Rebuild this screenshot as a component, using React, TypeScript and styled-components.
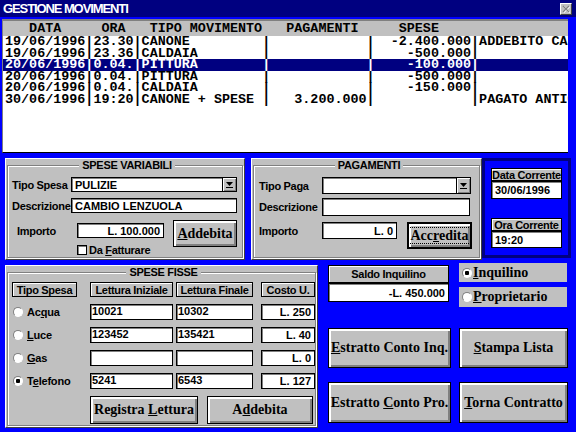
import React from 'react';
import styled, {createGlobalStyle} from 'styled-components';

const BLUE = '#0000ff';
const NAVY = '#000080';
const GRAY = '#c0c0c0';
const DARK = '#808080';
const SANS = '"Liberation Sans", Arial, sans-serif';
const SERIF = '"Liberation Serif", "Times New Roman", serif';
const MONO = '"Liberation Mono", "Courier New", monospace';

const GlobalStyle = createGlobalStyle`
  html, body { margin: 0; padding: 0; background: ${BLUE}; }
  body { font-family: ${SANS}; }
  * { box-sizing: border-box; }
`;

type Movimento = {data: string, ora: string, tipo: string, pag: string, spese: string, note: string};

const movimenti: Movimento[] = [
    {data: '19/06/1996', ora: '23.30', tipo: 'CANONE', pag: '', spese: '-2.400.000', note: 'ADDEBITO CANONE MESE'},
    {data: '19/06/1996', ora: '23.36', tipo: 'CALDAIA', pag: '', spese: '-500.000', note: ''},
    {data: '20/06/1996', ora: '0.04.', tipo: 'PITTURA', pag: '', spese: '-100.000', note: ''},
    {data: '20/06/1996', ora: '0.04.', tipo: 'PITTURA', pag: '', spese: '-500.000', note: ''},
    {data: '20/06/1996', ora: '0.04.', tipo: 'CALDAIA', pag: '', spese: '-150.000', note: ''},
    {data: '30/06/1996', ora: '19:20', tipo: 'CANONE + SPESE', pag: '3.200.000', spese: '', note: 'PAGATO ANTICIPATAMENTE'},
];

const header = '   DATA     ORA   TIPO MOVIMENTO   PAGAMENTI     SPESE';
const toLine = (m: Movimento) =>
    `${m.data}|${m.ora.padEnd(5)}|${m.tipo.padEnd(15)}|${m.pag.padStart(12)}|${m.spese.padStart(12)}|${m.note}`;

const Window = styled.div`
  width: 576px;
  height: 432px;
  background: ${BLUE};
  overflow: hidden;
  display: flex;
  flex-direction: column;
`;

const TitleBar = styled.div`
  flex: none;
  height: 17px;
  background: ${NAVY};
  color: #fff;
  display: flex;
  align-items: center;
  justify-content: space-between;
  padding: 0 4px 0 3px;
  font: bold 13px ${SANS};
  letter-spacing: -1.1px;
`;

const CloseBox = styled.div`
  width: 12px;
  height: 12px;
  background: ${GRAY};
  border: 1px solid;
  border-color: #fff #404040 #404040 #fff;
  display: flex;
  align-items: center;
  justify-content: center;
`;

const ListBox = styled.div`
  flex: none;
  margin: 2px 0 0 2px;
  width: 566px;
  height: 134px;
  background: #fff;
  border-top: 2px solid ${DARK};
  border-left: 1px solid ${DARK};
  border-bottom: 1px solid #000;
  overflow: hidden;
  font: bold 13.4px ${MONO};
`;

const ListHeader = styled.div`
  height: 15px;
  line-height: 15px;
  background: ${GRAY};
  white-space: pre;
  padding-left: 2px;
`;

const ListRow = styled.div<{ $sel?: boolean }>`
  height: 11.5px;
  line-height: 12px;
  white-space: pre;
  padding-left: 2px;
  background: ${p => p.$sel ? NAVY : 'transparent'};
  color: ${p => p.$sel ? '#fff' : '#000'};
`;

const PanelRow = styled.div<{ $mt: number, $h: number }>`
  flex: none;
  display: flex;
  align-items: flex-start;
  margin: ${p => p.$mt}px 0 0 5px;
  height: ${p => p.$h}px;
`;

const Panel = styled.div<{ $w: number, $h: number }>`
  width: ${p => p.$w}px;
  height: ${p => p.$h}px;
  background: ${GRAY};
  border: 1px solid;
  border-color: #fff #404040 #404040 #fff;
  padding: 0 1px 1px 1px;
  display: flex;
`;

const Frame = styled.fieldset<{ $pl: number, $pt: number }>`
  flex: 1;
  min-width: 0;
  margin: 0;
  padding: ${p => p.$pt}px 0 0 ${p => p.$pl}px;
  border: 1px solid ${DARK};
  box-shadow: inset 1px 1px 0 #fff, 1px 1px 0 #fff;
`;

const Legend = styled.legend`
  margin: 0 auto;
  padding: 0 3px;
  background: ${GRAY};
  font: bold 11px/13px ${SANS};
  letter-spacing: -0.3px;
`;

const Row = styled.div<{ $mt?: number, $top?: boolean }>`
  display: flex;
  align-items: ${p => p.$top ? 'flex-start' : 'center'};
  margin-top: ${p => p.$mt || 0}px;
`;

const Col = styled.div<{ $w: number }>`
  width: ${p => p.$w}px;
  display: flex;
  flex-direction: column;
`;

const Label = styled.span<{ $w: number, $pl?: number }>`
  flex: none;
  width: ${p => p.$w}px;
  padding-left: ${p => p.$pl || 0}px;
  font: bold 11px ${SANS};
  letter-spacing: -0.3px;
  white-space: nowrap;
`;

const Field = styled.div<{ $w: number, $h: number, $right?: boolean, $top?: boolean }>`
  flex: none;
  width: ${p => p.$w}px;
  height: ${p => p.$h}px;
  background: #fff;
  border: 1px solid #000;
  box-shadow: inset 1px 1px 0 ${DARK};
  display: flex;
  align-items: ${p => p.$top ? 'flex-start' : 'center'};
  justify-content: ${p => p.$right ? 'flex-end' : 'flex-start'};
  padding: ${p => p.$top ? '0 2px 0 1px' : '0 3px 0 3px'};
  font: bold 11px ${SANS};
  white-space: nowrap;
  overflow: hidden;
`;

const ComboWrap = styled.div`
  position: relative;
`;

const ComboBtn = styled.div`
  position: absolute;
  right: 1px;
  top: 1px;
  bottom: 1px;
  width: 14px;
  background: ${GRAY};
  border-left: 1px solid #000;
  box-shadow: inset 1px 1px 0 #fff, inset -1px -1px 0 ${DARK};
  display: flex;
  align-items: center;
  justify-content: center;
`;

const Btn = styled.button<{ $w: number, $h: number, $def?: boolean }>`
  flex: none;
  width: ${p => p.$w}px;
  height: ${p => p.$h}px;
  padding: 0;
  background: ${GRAY};
  color: #000;
  border: ${p => p.$def ? 2 : 1}px solid #000;
  box-shadow: inset 2px 2px 0 #fff, inset -2px -2px 0 ${DARK};
  font: bold 14px ${SERIF};
  display: flex;
  align-items: center;
  justify-content: center;
  white-space: nowrap;
`;

const Focus = styled.span`
  border: 1px dotted #000;
  padding: 0 1px;
  line-height: 15px;
`;

const Key = styled.span`
  text-decoration: underline;
`;

const Check = styled.span`
  width: 10px;
  height: 10px;
  background: #fff;
  border: 1px solid #000;
  box-shadow: inset 1px 1px 0 ${DARK};
  margin-right: 2px;
`;

const Radio = styled.span<{ $on?: boolean }>`
  flex: none;
  width: 10px;
  height: 10px;
  border-radius: 50%;
  border: 1px solid;
  border-color: ${DARK} #fff #fff ${DARK};
  background: ${p => p.$on ? 'radial-gradient(circle, #000 0 2px, #fff 2.5px)' : '#fff'};
`;

const DataBox = styled.div`
  width: 89px;
  height: 100px;
  border: 3px solid ${NAVY};
  padding: 7px 0 0 6px;
  display: flex;
  flex-direction: column;
`;

const TagLabel = styled.div<{ $w: number, $h: number, $mt?: number }>`
  width: ${p => p.$w}px;
  height: ${p => p.$h}px;
  margin-top: ${p => p.$mt || 0}px;
  background: ${GRAY};
  border: 1px solid #000;
  box-shadow: inset 1px 1px 0 #fff;
  display: flex;
  align-items: center;
  justify-content: center;
  font: bold 11px ${SANS};
  letter-spacing: -0.3px;
  white-space: nowrap;
`;

const FixedGrid = styled.div`
  display: grid;
  grid-template-columns: 78px 86px 85px 54px;
  grid-template-rows: 15px 16px 16px 16px 16px 28px;
  row-gap: 7px;
`;

const RadioCell = styled.div`
  display: flex;
  align-items: center;
  gap: 4px;
  padding-left: 1px;
  font: bold 11px ${SANS};
  letter-spacing: -0.2px;
`;

const ButtonPair = styled.div`
  grid-column: 2 / 5;
  display: flex;
  gap: 9px;
`;

const RightArea = styled.div`
  margin: -2px 0 0 10px;
  display: grid;
  grid-template-columns: 123px 109px;
  grid-template-rows: 51px 40px 41px;
  column-gap: 8px;
  row-gap: 14px;
`;

const Saldo = styled.div`
  margin-top: 2px;
  display: flex;
  flex-direction: column;
`;

const Options = styled.div`
  display: flex;
  flex-direction: column;
  gap: 5px;
`;

const Option = styled.div<{ $h: number }>`
  width: 108px;
  height: ${p => p.$h}px;
  background: ${GRAY};
  display: flex;
  align-items: center;
  gap: 1px;
  padding-left: 3px;
  font: bold 14px ${SERIF};
`;

const Arrow = () => (
    <svg width="7" height="7" viewBox="0 0 7 7">
        <path d="M0 1h7L3.5 5z" fill="#000"/>
        <rect y="6" width="7" height="1" fill="#000"/>
    </svg>
);

const Combo = ({w, h, value}: { w: number, h: number, value: string }) => (
    <ComboWrap>
        <Field $w={w} $h={h}>{value}</Field>
        <ComboBtn><Arrow/></ComboBtn>
    </ComboWrap>
);

const fisse = [
    {label: <>Ac<Key>q</Key>ua</>, ini: '10021', fin: '10302', costo: 'L. 250'},
    {label: <><Key>L</Key>uce</>, ini: '123452', fin: '135421', costo: 'L. 40'},
    {label: <><Key>G</Key>as</>, ini: '', fin: '', costo: 'L. 0'},
    {label: <>T<Key>e</Key>lefono</>, ini: '5241', fin: '6543', costo: 'L. 127', on: true},
];

export default function App() {
    return (
        <>
            <GlobalStyle/>
            <Window>
                <TitleBar>
                    <span>GESTIONE MOVIMENTI</span>
                    <CloseBox>
                        <svg width="8" height="8" viewBox="0 0 8 8">
                            <path d="M1 1l6 6M7 1l-6 6" stroke="#fff" strokeWidth="1.4" transform="translate(0.6 0.6)"/>
                            <path d="M1 1l6 6M7 1l-6 6" stroke={DARK} strokeWidth="1.2"/>
                        </svg>
                    </CloseBox>
                </TitleBar>

                <ListBox>
                    <ListHeader>{header}</ListHeader>
                    {movimenti.map((m, i) => <ListRow key={i} $sel={i === 2}>{toLine(m)}</ListRow>)}
                </ListBox>

                <PanelRow $mt={5} $h={102}>
                    <Panel $w={240} $h={102}>
                        <Frame $pl={4} $pt={5}>
                            <Legend>SPESE VARIABILI</Legend>
                            <Row>
                                <Label $w={59}>Tipo Spesa</Label>
                                <Combo w={166} h={15} value="PULIZIE"/>
                            </Row>
                            <Row $mt={6}>
                                <Label $w={59}>Descrizione</Label>
                                <Field $w={166} $h={15}>CAMBIO LENZUOLA</Field>
                            </Row>
                            <Row $mt={7} $top>
                                <Col $w={161}>
                                    <Row $mt={3}>
                                        <Label $w={65} $pl={5}>Importo</Label>
                                        <Field $w={87} $h={15} $right>L. 100.000</Field>
                                    </Row>
                                    <Row $mt={6}>
                                        <Label $w={65}/>
                                        <Check/>
                                        <Label $w={80}>Da <Key>F</Key>atturare</Label>
                                    </Row>
                                </Col>
                                <Btn $w={64} $h={27}><span><Key>A</Key>ddebita</span></Btn>
                            </Row>
                        </Frame>
                    </Panel>
                    <div style={{width: 6}}/>
                    <Panel $w={231} $h={102}>
                        <Frame $pl={5} $pt={5}>
                            <Legend>PAGAMENTI</Legend>
                            <Row>
                                <Label $w={63}>Tipo Paga</Label>
                                <Combo w={149} h={17} value=""/>
                            </Row>
                            <Row $mt={4}>
                                <Label $w={63}>Descrizione</Label>
                                <Field $w={148} $h={18}/>
                            </Row>
                            <Row $mt={6} $top>
                                <Col $w={148}>
                                    <Row>
                                        <Label $w={63}>Importo</Label>
                                        <Field $w={75} $h={17} $right>L. 0</Field>
                                    </Row>
                                </Col>
                                <Btn $w={65} $h={27} $def><Focus>Acc<Key>r</Key>edita</Focus></Btn>
                            </Row>
                        </Frame>
                    </Panel>
                    <DataBox>
                        <TagLabel $w={71} $h={13}>Data Corrente</TagLabel>
                        <Field $w={71} $h={18}>30/06/1996</Field>
                        <TagLabel $w={71} $h={13} $mt={19}>Ora Corrente</TagLabel>
                        <Field $w={71} $h={17}>19:20</Field>
                    </DataBox>
                </PanelRow>

                <PanelRow $mt={5} $h={163}>
                    <Panel $w={313} $h={163}>
                        <Frame $pl={4} $pt={3}>
                            <Legend>SPESE FISSE</Legend>
                            <FixedGrid>
                                <TagLabel $w={65} $h={15}>Tipo Spesa</TagLabel>
                                <TagLabel $w={83} $h={15}>Lettura Iniziale</TagLabel>
                                <TagLabel $w={77} $h={15}>Lettura Finale</TagLabel>
                                <TagLabel $w={54} $h={15}>Costo U.</TagLabel>
                                {fisse.map((f, i) => (
                                    <React.Fragment key={i}>
                                        <RadioCell><Radio $on={f.on}/><span>{f.label}</span></RadioCell>
                                        <Field $w={83} $h={16} $top>{f.ini}</Field>
                                        <Field $w={77} $h={16} $top>{f.fin}</Field>
                                        <Field $w={54} $h={16} $right>{f.costo}</Field>
                                    </React.Fragment>
                                ))}
                                <ButtonPair>
                                    <Btn $w={108} $h={28}><span>Registra <Key>L</Key>ettura</span></Btn>
                                    <Btn $w={106} $h={28}><span>A<Key>d</Key>debita</span></Btn>
                                </ButtonPair>
                            </FixedGrid>
                        </Frame>
                    </Panel>
                    <RightArea>
                        <Saldo>
                            <TagLabel $w={121} $h={18}>Saldo Inquilino</TagLabel>
                            <Field $w={121} $h={19} $right>-L. 450.000</Field>
                        </Saldo>
                        <Options>
                            <Option $h={19}><Radio $on/><span><Key>I</Key>nquilino</span></Option>
                            <Option $h={20}><Radio/><span><Key>P</Key>roprietario</span></Option>
                        </Options>
                        <Btn $w={123} $h={40}><span><Key>E</Key>stratto Conto Inq.</span></Btn>
                        <Btn $w={109} $h={40}><span><Key>S</Key>tampa Lista</span></Btn>
                        <Btn $w={123} $h={41}><span>Estratto <Key>C</Key>onto Pro.</span></Btn>
                        <Btn $w={109} $h={41}><span><Key>T</Key>orna Contratto</span></Btn>
                    </RightArea>
                </PanelRow>
            </Window>
        </>
    );
}
